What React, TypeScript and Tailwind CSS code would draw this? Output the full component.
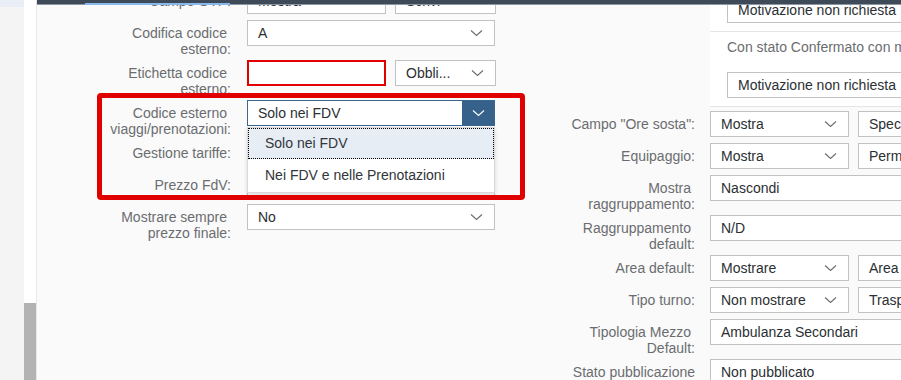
import { ReactNode } from "react";

function Chevron({ color = "#6a6d70" }: { color?: string }) {
  return (
    <svg width="13" height="8" viewBox="0 0 13 8" className="shrink-0">
      <path d="M1 1.5l5.5 5 5.5-5" fill="none" stroke={color} strokeWidth="1.1" />
    </svg>
  );
}

function Select({ value, width, chevron = true }: { value: string; width: string; chevron?: boolean }) {
  return (
    <div
      className={`flex h-[26px] shrink-0 items-center justify-between overflow-hidden whitespace-nowrap border border-[#c2c2c2] bg-white pl-[10px] pr-[11px] text-[#2b2f33] ${width}`}
    >
      <span>{value}</span>
      {chevron && <Chevron />}
    </div>
  );
}

function Label({ lines }: { lines: string[] }) {
  return (
    <div className="flex flex-col items-end pt-[5px] leading-[16px] text-[#6a6d70]">
      {lines.map((l, i) => (
        <span key={i} className={i < lines.length - 1 ? "pr-[4px]" : ""}>
          {l}
        </span>
      ))}
    </div>
  );
}

function Row({ label, h, labelW, gap, children }: { label: string[]; h: string; labelW: string; gap: string; children: ReactNode }) {
  return (
    <div className={`flex items-start ${h} ${gap}`}>
      <div className={`shrink-0 ${labelW}`}>
        <Label lines={label} />
      </div>
      <div className="flex gap-[9px]">{children}</div>
    </div>
  );
}

function LeftRow(p: { label: string[]; h: string; children: ReactNode }) {
  return <Row {...p} labelW="w-[194px]" gap="gap-[16px]" />;
}

function RightRow(p: { label: string[]; h: string; children: ReactNode }) {
  return <Row {...p} labelW="w-[175px]" gap="gap-[15px]" />;
}

export default function App() {
  return (
    <div className="flex h-[380px] w-[901px] overflow-hidden font-['Liberation_Sans',Arial,sans-serif] text-[14px]">
      {/* left strip */}
      <div className="flex w-[24px] shrink-0 flex-col bg-[#f4f4f4]">
        <div className="h-[7px] bg-[#e9eef6]" />
      </div>
      {/* scrollbar */}
      <div className="flex w-[12px] shrink-0 flex-col justify-end bg-white">
        <div className="h-[77px] bg-[#b3b3b3]" />
      </div>
      <div className="w-px shrink-0 bg-[#e8e8e8]" />

      <div className="relative flex flex-1 overflow-hidden bg-[#fafafa]">
        {/* sticky header edge */}
        <div className="absolute inset-x-0 top-0 z-20 h-[4px] bg-[#3f4a58]" />
        <div className="absolute inset-x-0 top-[4px] z-20 h-px bg-[#8d97a3]" />
        <div className="absolute left-[48px] top-[3px] z-20 h-[2px] w-[145px] bg-[#8ab8ea]" />

        {/* left form */}
        <div className="relative flex w-[483px] shrink-0 flex-col -mt-[12px]">
          <LeftRow label={["Campo OTP:"]} h="h-[32px]">
            <Select value="Mostra" width="w-[139px]" chevron={false} />
            <Select value="Scrivi" width="w-[101px]" chevron={false} />
          </LeftRow>
          <LeftRow label={["Codifica codice", "esterno:"]} h="h-[40px]">
            <Select value="A" width="w-[248px]" />
          </LeftRow>
          <LeftRow label={["Etichetta codice", "esterno:"]} h="h-[40px]">
            <div className="h-[26px] w-[139px] border-2 border-[#e00000] bg-white" />
            <Select value="Obbli..." width="w-[101px]" />
          </LeftRow>
          <LeftRow label={["Codice esterno", "viaggi/prenotazioni:"]} h="h-[40px]">
            <div className="relative z-10">
              <div className="flex h-[26px] w-[248px] items-center justify-between border border-[#3c6590] bg-white pl-[10px] text-[#2b2f33]">
                <span>Solo nei FDV</span>
                <div className="flex h-full w-[32px] items-center justify-center bg-[#35618b]">
                  <Chevron color="#ffffff" />
                </div>
              </div>
              <div className="absolute left-0 top-[27px] w-[248px] border border-[#d9d9d9] bg-white shadow-[0_2px_4px_rgba(0,0,0,0.15)]">
                <div className="flex h-[31px] items-center border border-dotted border-black bg-[#e6edf5] pl-[16px] text-[#32363a]">
                  Solo nei FDV
                </div>
                <div className="flex h-[33px] items-center pl-[17px] text-[#32363a]">Nei FDV e nelle Prenotazioni</div>
              </div>
            </div>
          </LeftRow>
          <LeftRow label={["Gestione tariffe:"]} h="h-[32px]">
            <Select value="" width="w-[248px]" />
          </LeftRow>
          <LeftRow label={["Prezzo FdV:"]} h="h-[32px]">
            <Select value="" width="w-[248px]" />
          </LeftRow>
          <LeftRow label={["Mostrare sempre", "prezzo finale:"]} h="h-[40px]">
            <Select value="No" width="w-[248px]" />
          </LeftRow>

          {/* annotation */}
          <div className="absolute left-[60px] top-[105px] z-30 h-[107px] w-[428px] rounded-[4px] border-[5px] border-[#e00000]" />
        </div>

        {/* right form */}
        <div className="flex flex-1 flex-col">
          <div className="ml-[190px] flex flex-col bg-white">
            <div className="h-[32px] border-b border-[#e5e5e5] pl-[17px]">
              <div className="-mt-[3px] flex h-[26px] items-center whitespace-nowrap border border-[#c2c2c2] pl-[10px] text-[#2b2f33]">
                Motivazione non richiesta
              </div>
            </div>
            <div className="h-[75px] border-b border-[#e5e5e5] pl-[17px]">
              <div className="mt-[7px] whitespace-nowrap leading-[16px] text-[#6a6d70]">Con stato Confermato con motivazione</div>
              <div className="mt-[17px] flex h-[26px] items-center whitespace-nowrap border border-[#c2c2c2] pl-[10px] text-[#2b2f33]">
                Motivazione non richiesta
              </div>
            </div>
          </div>
          <div className="mt-[4px] flex flex-col">
            <RightRow label={['Campo "Ore sosta":']} h="h-[32px]">
              <Select value="Mostra" width="w-[139px]" />
              <Select value="Specifico" width="w-[120px]" chevron={false} />
            </RightRow>
            <RightRow label={["Equipaggio:"]} h="h-[32px]">
              <Select value="Mostra" width="w-[139px]" />
              <Select value="Perm..." width="w-[120px]" chevron={false} />
            </RightRow>
            <RightRow label={["Mostra", "raggruppamento:"]} h="h-[40px]">
              <Select value="Nascondi" width="w-[220px]" chevron={false} />
            </RightRow>
            <RightRow label={["Raggruppamento", "default:"]} h="h-[40px]">
              <Select value="N/D" width="w-[220px]" chevron={false} />
            </RightRow>
            <RightRow label={["Area default:"]} h="h-[32px]">
              <Select value="Mostrare" width="w-[139px]" />
              <Select value="Area ..." width="w-[120px]" chevron={false} />
            </RightRow>
            <RightRow label={["Tipo turno:"]} h="h-[32px]">
              <Select value="Non mostrare" width="w-[139px]" />
              <Select value="Trasporto" width="w-[120px]" chevron={false} />
            </RightRow>
            <RightRow label={["Tipologia Mezzo", "Default:"]} h="h-[40px]">
              <Select value="Ambulanza Secondari" width="w-[220px]" chevron={false} />
            </RightRow>
            <RightRow label={["Stato pubblicazione"]} h="h-[32px]">
              <Select value="Non pubblicato" width="w-[220px]" chevron={false} />
            </RightRow>
          </div>
        </div>
      </div>
    </div>
  );
}
